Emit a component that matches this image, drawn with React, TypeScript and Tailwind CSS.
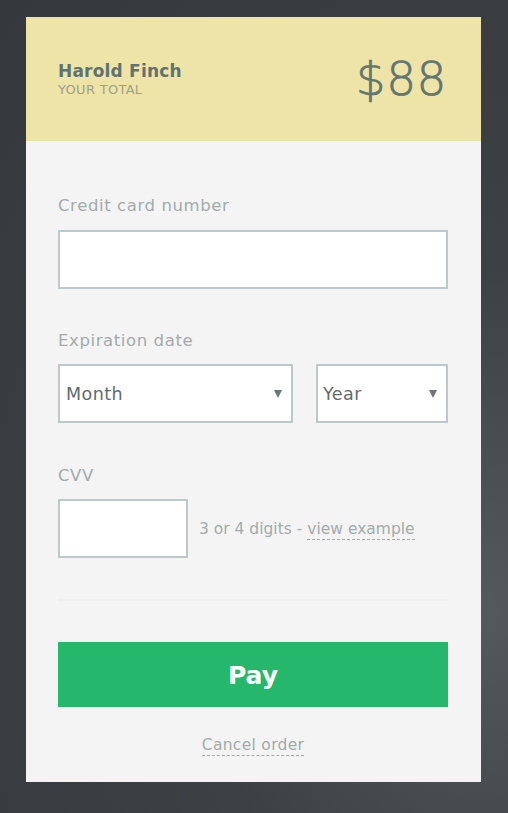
import React from "react";

const font = { fontFamily: '"DejaVu Sans", "Noto Sans", sans-serif' };

function Caret() {
  return (
    <svg width="8" height="8" viewBox="0 0 8 8" className="absolute right-[9px] top-1/2 -translate-y-1/2">
      <path d="M0 0 L8 0 L4 8 Z" fill="#6b7777" />
    </svg>
  );
}

export default function App() {
  return (
    <div
      className="w-[508px] h-[813px] overflow-hidden bg-[radial-gradient(ellipse_at_95%_75%,#55595c_0%,#3d4144_40%,#35393d_100%)] pt-[17px] pl-[26px]"
      style={font}
    >
      <div className="w-[455px] h-[765px] bg-[#f4f4f4] flex flex-col">
        <div className="h-[124px] bg-[#efe4a8] flex items-center justify-between pl-[32px] pr-[34px]">
          <div className="flex flex-col">
            <div className="text-[17px] font-bold leading-[20px] text-[#5f7270] tracking-[0.2px]">Harold Finch</div>
            <div className="text-[13px] leading-[17px] text-[#9f9f8a] tracking-[0.3px]">YOUR TOTAL</div>
          </div>
          <div className="text-[47px] leading-none text-[#627571] mt-[-2px] tracking-[0.5px] [-webkit-text-stroke:0.7px_#627571]" style={{ fontFamily: '"DejaVu Sans", sans-serif', fontWeight: 200 }}>
            $88
          </div>
        </div>
        <div className="flex flex-col pl-[32px] pr-[33px] pt-[53px]">
          <div className="text-[16.5px] leading-[24px] text-[#a3abab] tracking-[0.6px]">Credit card number</div>
          <div className="mt-[12px] h-[59px] border-2 border-[#bcc8c9] bg-white" />
          <div className="mt-[40px] text-[16.5px] leading-[24px] text-[#a3abab] tracking-[0.6px]">Expiration date</div>
          <div className="mt-[11px] flex gap-[23px]">
            <div className="relative w-[235px] h-[59px] border-2 border-[#bcc8c9] bg-white flex items-center pl-[6px]">
              <span className="text-[17.5px] text-[#5f6c6c] tracking-[0.45px] mt-[2px]">Month</span>
              <Caret />
            </div>
            <div className="relative w-[132px] h-[59px] border-2 border-[#bcc8c9] bg-white flex items-center pl-[5px]">
              <span className="text-[17.5px] text-[#5f6c6c] tracking-[0.45px] mt-[2px]">Year</span>
              <Caret />
            </div>
          </div>
          <div className="mt-[41px] text-[16.5px] leading-[24px] text-[#a3abab] tracking-[0.6px]">CVV</div>
          <div className="mt-[11px] flex items-center">
            <div className="w-[130px] h-[59px] border-2 border-[#bcc8c9] bg-white" />
            <div className="ml-[11px] mt-[2px] text-[15.5px] text-[#a3abab] tracking-[0px]">
              3 or 4 digits -{" "}
              <span className="border-b border-dashed border-[#a3abab] pb-[1px]">view example</span>
            </div>
          </div>
          <div className="mt-[41px] h-[2px] bg-[#eeeff0]" />
          <div className="mt-[41px] h-[65px] bg-[#25b86b] flex items-center justify-center">
            <span className="text-[25px] font-bold text-white tracking-[0px] mt-[2px]">Pay</span>
          </div>
          <div className="mt-[28px] flex justify-center">
            <span className="text-[15.5px] leading-[20px] text-[#a3abab] border-b border-dashed border-[#a3abab] tracking-[0.3px]">Cancel order</span>
          </div>
        </div>
      </div>
    </div>
  );
}
